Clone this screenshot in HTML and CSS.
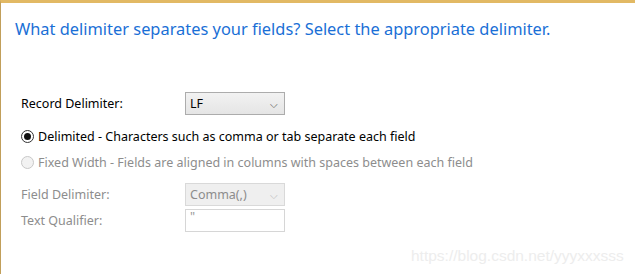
FILE: index.html
```html
<!DOCTYPE html>
<html lang="en">
<head>
    <meta charset="UTF-8">
    <title>Delimiter</title>
    <link rel="stylesheet" href="styles.css">
</head>
<body>
    <div class="page">
        <h1 class="title">What delimiter separates your fields? Select the appropriate delimiter.</h1>

        <div class="row record">
            <label class="label">Record Delimiter:</label>
            <div class="select"><span>LF</span><span class="arrow">&#x2335;</span></div>
        </div>

        <div class="radio-row first">
            <span class="radio checked"></span>
            <span>Delimited - Characters such as comma or tab separate each field</span>
        </div>
        <div class="radio-row disabled">
            <span class="radio"></span>
            <span>Fixed Width - Fields are aligned in columns with spaces between each field</span>
        </div>

        <div class="row field disabled">
            <label class="label">Field Delimiter:</label>
            <div class="select off"><span>Comma(,)</span><span class="arrow">&#x2335;</span></div>
        </div>
        <div class="row disabled">
            <label class="label">Text Qualifier:</label>
            <div class="textbox">"</div>
        </div>

        <div class="watermark">https://blog.csdn.net/yyyxxxsss</div>
    </div>
</body>
</html>
```

FILE: styles.css
```css
body {
    margin: 0;
    font-family: "Noto Sans", "Open Sans", sans-serif;
    font-size: 12.5px;
    color: #000;
    background: #fff;
}

.page {
    width: 634px;
    height: 271px;
    border-top: 3px solid #e2b964;
    border-left: 1px solid #c19f5a;
    position: relative;
}

.title {
    margin: 0;
    padding: 14px 0 0 14px;
    font-weight: normal;
    font-size: 16.4px;
    color: #1a6fd6;
    height: 73px;
    box-sizing: border-box;
}

.row {
    display: flex;
    align-items: center;
    padding-left: 20px;
    height: 23px;
}

.row.record {
    margin-top: 16px;
}

.row.field {
    margin-top: 8px;
    margin-bottom: 3px;
}

.label {
    width: 164px;
}

.select {
    width: 88px;
    height: 21px;
    border: 1px solid #acacac;
    background: linear-gradient(#f2f2f2, #e5e5e5);
    display: flex;
    align-items: center;
    justify-content: space-between;
    padding: 0 6px 0 4px;
}

.select.off {
    background: #efefef;
    border-color: #d9d9d9;
    color: #8c8c8c;
}

.arrow {
    font-size: 10px;
    color: #555;
}

.select.off .arrow {
    color: #bbb;
}

.textbox {
    width: 90px;
    height: 21px;
    border: 1px solid #d6d6d6;
    padding: 0 4px;
    line-height: 14px;
    color: #999;
}

.radio-row {
    display: flex;
    align-items: center;
    gap: 4px;
    padding-left: 20px;
    height: 26px;
}

.radio-row.first {
    margin-top: 8px;
}

.radio {
    width: 11px;
    height: 11px;
    border: 1px solid #333;
    border-radius: 50%;
    background: #fff;
    position: relative;
}

.radio.checked::after {
    content: "";
    position: absolute;
    left: 2px;
    top: 2px;
    width: 7px;
    height: 7px;
    border-radius: 50%;
    background: #111;
}

.disabled {
    color: #8d8d8d;
}

.disabled .radio {
    border-color: #c8c8c8;
    background: #f2f2f2;
}

.watermark {
    position: absolute;
    left: 410px;
    top: 244px;
    font-family: "Liberation Sans", sans-serif;
    font-size: 15.5px;
    color: #ededed;
}
```
